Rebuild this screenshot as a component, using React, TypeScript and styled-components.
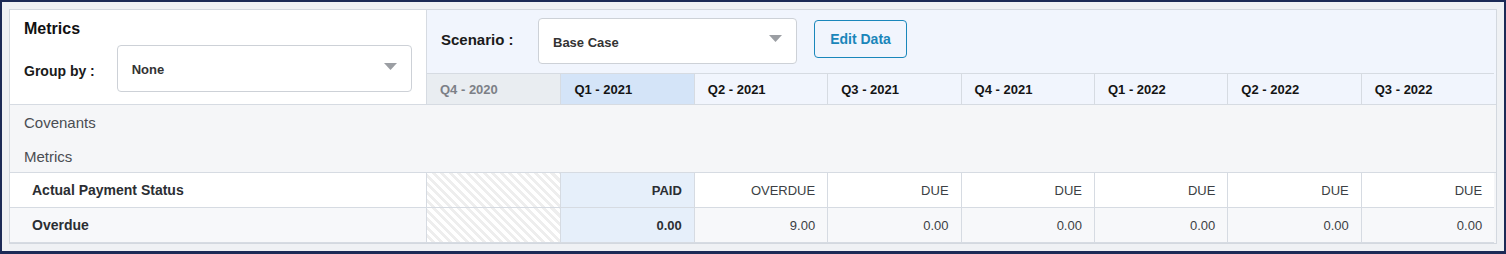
import React from 'react'
import styled, { createGlobalStyle } from 'styled-components'

const quarters = ['Q4 - 2020', 'Q1 - 2021', 'Q2 - 2021', 'Q3 - 2021', 'Q4 - 2021', 'Q1 - 2022', 'Q2 - 2022', 'Q3 - 2022']

const rows = [
  { label: 'Actual Payment Status', values: ['PAID', 'OVERDUE', 'DUE', 'DUE', 'DUE', 'DUE', 'DUE'] },
  { label: 'Overdue', values: ['0.00', '9.00', '0.00', '0.00', '0.00', '0.00', '0.00'] },
]

const GlobalStyle = createGlobalStyle`
  body {
    margin: 0;
    font-family: "Liberation Sans", Arial, sans-serif;
    background: #ffffff;
  }
`

function Caret() {
  return (
    <CaretIcon width="13" height="8" viewBox="0 0 13 8">
      <path d="M0 0 L13 0 L6.5 7 Z" fill="#9b9ea3" />
    </CaretIcon>
  )
}

function App() {
  return (
    <>
      <GlobalStyle />
      <Frame>
        <Card>
          <Header>
            <LeftPanel>
              <Title>Metrics</Title>
              <GroupRow>
                <FieldLabel>Group by :</FieldLabel>
                <Select $width={296} $height={47}>
                  <span>None</span>
                  <Caret />
                </Select>
              </GroupRow>
            </LeftPanel>
            <ScenarioBar>
              <ScenarioLabel>Scenario :</ScenarioLabel>
              <Select $width={259} $height={46}>
                <span>Base Case</span>
                <Caret />
              </Select>
              <EditButton>Edit Data</EditButton>
            </ScenarioBar>
            {quarters.map((q, i) => (
              <QuarterCell key={q} $kind={i === 0 ? 'past' : i === 1 ? 'current' : 'future'}>
                {q}
              </QuarterCell>
            ))}
          </Header>
          <SectionRow>Covenants</SectionRow>
          <SectionRow $short>Metrics</SectionRow>
          <Table>
            {rows.map((row, r) => (
              <React.Fragment key={row.label}>
                <LabelCell $alt={r === 1}>{row.label}</LabelCell>
                <HatchCell />
                {row.values.map((v, i) => (
                  <ValueCell key={i} $alt={r === 1} $current={i === 0} $strong={i === 0}>
                    {v}
                  </ValueCell>
                ))}
              </React.Fragment>
            ))}
          </Table>
        </Card>
      </Frame>
    </>
  )
}

export default App

const Frame = styled.div`
  box-sizing: border-box;
  width: 1506px;
  height: 254px;
  border: 2px solid #1c2a56;
  border-bottom-width: 3px;
  background: #eff1f4;
  padding: 7px 7px 0 7px;
`

const Card = styled.div`
  border: 1px solid #d3d8df;
  background: #f5f6f8;
`

const Header = styled.div`
  display: grid;
  grid-template-columns: 417px repeat(8, 133.4px) 1fr;
  grid-template-rows: 63px 31px;
  border-bottom: 1px solid #d6dbe2;
  background: #f1f5fd;
`

const LeftPanel = styled.div`
  grid-row: 1 / 3;
  background: #ffffff;
  border-right: 1px solid #d6dbe2;
  padding: 9px 14px 0 14px;
  display: flex;
  flex-direction: column;
`

const Title = styled.div`
  font-size: 16px;
  font-weight: 700;
  color: #111;
  line-height: 20px;
`

const GroupRow = styled.div`
  display: flex;
  align-items: center;
  margin-top: 6px;
`

const FieldLabel = styled.div`
  font-size: 14px;
  font-weight: 700;
  color: #1a1a1a;
  width: 93px;
  padding-top: 5px;
`

const Select = styled.div<{ $width: number; $height: number }>`
  box-sizing: border-box;
  width: ${(p) => p.$width}px;
  height: ${(p) => p.$height}px;
  background: #ffffff;
  border: 1px solid #cdd1d7;
  border-radius: 4px;
  padding: 2px 14px 0 14px;
  display: flex;
  align-items: center;
  justify-content: space-between;
  font-size: 13px;
  font-weight: 700;
  color: #333;
`

const CaretIcon = styled.svg`
  display: block;
  margin-bottom: 6px;
`

const ScenarioBar = styled.div`
  grid-column: 2 / 11;
  display: flex;
  align-items: center;
  padding: 0 0 0 14px;
  margin-top: -1px;
`

const ScenarioLabel = styled.div`
  font-size: 15px;
  font-weight: 700;
  color: #1a1a1a;
  width: 97px;
  margin-bottom: 4px;
`

const EditButton = styled.button`
  box-sizing: border-box;
  margin-left: 17px;
  margin-bottom: 4px;
  width: 93px;
  height: 38px;
  border: 1px solid #1a87bb;
  border-radius: 4px;
  background: transparent;
  color: #1a86ba;
  font-family: "Liberation Sans", Arial, sans-serif;
  font-size: 14px;
  font-weight: 700;
  padding: 0;
`

const QuarterCell = styled.div<{ $kind: 'past' | 'current' | 'future' }>`
  border-top: 1px solid #d6dbe2;
  border-left: ${(p) => (p.$kind === 'past' ? 'none' : '1px solid #d6dbe2')};
  background: ${(p) => (p.$kind === 'past' ? '#e9edf1' : p.$kind === 'current' ? '#d4e4f8' : '#f1f5fd')};
  color: ${(p) => (p.$kind === 'past' ? '#7c8087' : '#141414')};
  font-size: 13px;
  font-weight: 700;
  display: flex;
  align-items: center;
  padding-left: 13px;
  padding-top: 1px;
`

const SectionRow = styled.div<{ $short?: boolean }>`
  height: ${(p) => (p.$short ? 32 : 35)}px;
  display: flex;
  align-items: center;
  padding-left: 14px;
  font-size: 15px;
  color: #4a4d52;
  background: #f5f6f8;
`

const Table = styled.div`
  display: grid;
  grid-template-columns: 417px repeat(8, 133.4px) 1fr;
  grid-auto-rows: 35px;
  border-top: 1px solid #d6dbe2;
`

const LabelCell = styled.div<{ $alt?: boolean }>`
  grid-column: 1;
  display: flex;
  align-items: center;
  padding-left: 22px;
  font-size: 14px;
  font-weight: 700;
  color: #2b2e33;
  background: ${(p) => (p.$alt ? '#f7f8fa' : '#ffffff')};
  border-right: 1px solid #d6dbe2;
  border-bottom: 1px solid #d6dbe2;
`

const HatchCell = styled.div`
  border-bottom: 1px solid #d6dbe2;
  background: repeating-linear-gradient(
    45deg,
    #ffffff 0px,
    #ffffff 3px,
    #eeeeee 3px,
    #eeeeee 6px
  );
`

const ValueCell = styled.div<{ $alt?: boolean; $current?: boolean; $strong?: boolean }>`
  display: flex;
  align-items: center;
  justify-content: flex-end;
  padding-right: 12px;
  font-size: 13px;
  font-weight: ${(p) => (p.$strong ? 700 : 400)};
  color: ${(p) => (p.$strong ? '#2b2e33' : '#3c3f44')};
  background: ${(p) => (p.$current ? '#e6effa' : p.$alt ? '#f7f8fa' : '#ffffff')};
  border-left: 1px solid #d6dbe2;
  border-bottom: 1px solid #d6dbe2;
`
